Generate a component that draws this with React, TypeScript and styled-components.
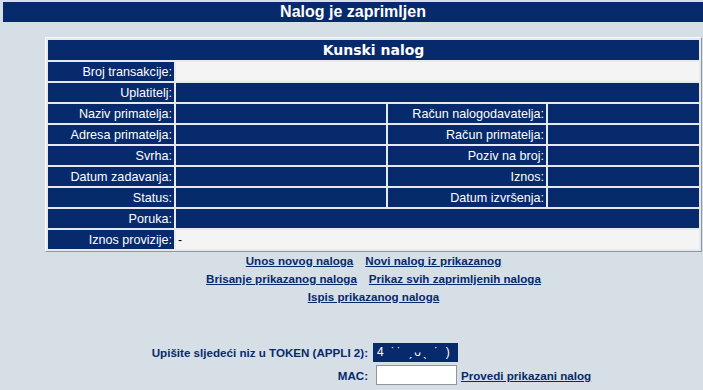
import styled, { createGlobalStyle } from "styled-components";

const GlobalStyle = createGlobalStyle`
  html, body {
    margin: 0;
    padding: 0;
    background: #d6dee6;
  }
  body {
    padding: 2px 0 0 3px;
    font-family: "Liberation Sans", Arial, sans-serif;
  }
`;

const navy = "#062a6c";

const TitleBar = styled.div`
  height: 20px;
  background: ${navy};
  color: #fff;
  font: bold 16px/20px "Liberation Sans", Arial, sans-serif;
  text-align: center;
`;

const Wrap = styled.div`
  width: 657px;
  margin: 15px 0 0 42px;
`;

const Table = styled.table`
  width: 100%;
  border-collapse: separate;
  border-spacing: 2px;
  background: #e6eaee;
  border: 1px solid;
  border-color: #fafafa #8e959c #8e959c #fafafa;
  table-layout: fixed;
`;

const Caption = styled.th`
  height: 20px;
  padding: 0;
  background: ${navy};
  color: #fff;
  font: bold 14px/20px "DejaVu Sans", Verdana, sans-serif;
  text-align: center;
`;

const Label = styled.td`
  height: 19px;
  padding: 0 2px 0 0;
  background: ${navy};
  color: #fff;
  font-size: 12.6px;
  text-align: right;
  white-space: nowrap;
`;

const Value = styled.td<{ $light?: boolean }>`
  height: 19px;
  padding: 0 2px;
  background: ${(p) => (p.$light ? "#f4f4f4" : navy)};
  color: #000;
  font-size: 12px;
`;

const Links = styled.div`
  text-align: center;
  line-height: 18px;
`;

const LinkRow = styled.div`
  display: flex;
  justify-content: center;
  gap: 12px;
`;

const Link = styled.a`
  color: ${navy};
  font-size: 11.6px;
  font-weight: bold;
  text-decoration: underline;
  cursor: pointer;
`;

const TokenGrid = styled.div`
  display: grid;
  grid-template-columns: 323px 1fr;
  column-gap: 5px;
  row-gap: 3px;
  margin-top: 37px;
  align-items: center;
`;

const TokenLabel = styled.span`
  color: ${navy};
  font-size: 11.6px;
  font-weight: bold;
  text-align: right;
`;

const TokenBox = styled.div`
  width: 81px;
  height: 19px;
  padding-left: 4px;
  background: ${navy};
  color: #fff;
  font-size: 12px;
  line-height: 19px;
  letter-spacing: 2px;
  white-space: pre;
`;

const MacRow = styled.div`
  display: flex;
  align-items: center;
  gap: 4px;
  padding-left: 3px;
`;

const MacInput = styled.input`
  box-sizing: border-box;
  width: 81px;
  height: 20px;
  padding: 0 2px;
  border: 1px solid #8e959c;
  background: #fff;
  font-size: 12px;
  outline: none;
`;

export default function App() {
  return (
    <>
      <GlobalStyle />
      <TitleBar>Nalog je zaprimljen</TitleBar>
      <Wrap>
        <Table>
          <colgroup>
            <col style={{ width: 126 }} />
            <col style={{ width: 210 }} />
            <col style={{ width: 158 }} />
            <col />
          </colgroup>
          <tbody>
            <tr>
              <Caption colSpan={4}>Kunski nalog</Caption>
            </tr>
            <tr>
              <Label>Broj transakcije:</Label>
              <Value $light colSpan={3} />
            </tr>
            <tr>
              <Label>Uplatitelj:</Label>
              <Value colSpan={3} />
            </tr>
            <tr>
              <Label>Naziv primatelja:</Label>
              <Value />
              <Label>Račun nalogodavatelja:</Label>
              <Value />
            </tr>
            <tr>
              <Label>Adresa primatelja:</Label>
              <Value />
              <Label>Račun primatelja:</Label>
              <Value />
            </tr>
            <tr>
              <Label>Svrha:</Label>
              <Value />
              <Label>Poziv na broj:</Label>
              <Value />
            </tr>
            <tr>
              <Label>Datum zadavanja:</Label>
              <Value />
              <Label>Iznos:</Label>
              <Value />
            </tr>
            <tr>
              <Label>Status:</Label>
              <Value />
              <Label>Datum izvršenja:</Label>
              <Value />
            </tr>
            <tr>
              <Label>Poruka:</Label>
              <Value colSpan={3} />
            </tr>
            <tr>
              <Label>Iznos provizije:</Label>
              <Value $light colSpan={3}>-</Value>
            </tr>
          </tbody>
        </Table>

        <Links>
          <LinkRow>
            <Link>Unos novog naloga</Link>
            <Link>Novi nalog iz prikazanog</Link>
          </LinkRow>
          <LinkRow>
            <Link>Brisanje prikazanog naloga</Link>
            <Link>Prikaz svih zaprimljenih naloga</Link>
          </LinkRow>
          <LinkRow>
            <Link>Ispis prikazanog naloga</Link>
          </LinkRow>
        </Links>

        <TokenGrid>
          <TokenLabel>Upišite sljedeći niz u TOKEN (APPLI 2):</TokenLabel>
          <TokenBox>{"4 ˙˙ ˏᴗˎ ˙ )"}</TokenBox>
          <TokenLabel>MAC:</TokenLabel>
          <MacRow>
            <MacInput autoFocus />
            <Link>Provedi prikazani nalog</Link>
          </MacRow>
        </TokenGrid>
      </Wrap>
    </>
  );
}
